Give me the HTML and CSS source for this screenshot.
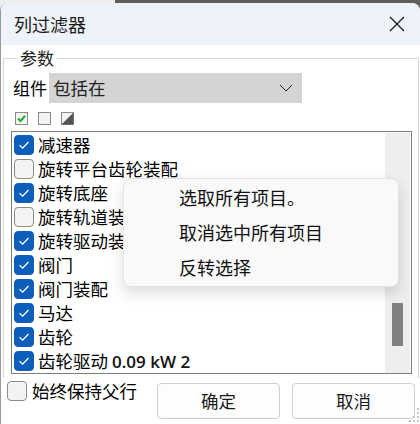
FILE: index.html
```html
<!DOCTYPE html>
<html lang="zh-CN">
<head>
<meta charset="utf-8">
<link rel="stylesheet" href="styles.css">
</head>
<body>
<div class="window">
  <div class="titlebar">
    <span class="title">列过滤器</span>
    <svg class="close" width="16" height="16" viewBox="0 0 16 16"><path d="M1 1 L15 15 M15 1 L1 15" stroke="#1a1a1a" stroke-width="1.3" fill="none"/></svg>
  </div>
  <fieldset class="group">
    <legend>参数</legend>
    <div class="combo-row">
      <span class="combo-label">组件</span>
      <div class="combo">
        <span>包括在</span>
        <svg width="14" height="8" viewBox="0 0 14 8"><path d="M1 1 L7 7 L13 1" stroke="#222" stroke-width="1" fill="none"/></svg>
      </div>
    </div>
    <div class="tools">
      <span class="tool"><svg width="13" height="13" viewBox="0 0 13 13"><rect x="0.5" y="0.5" width="12" height="12" fill="#f4f4f4" stroke="#8a8a8a"/><path d="M3 6.5 L5.5 9 L10 4" stroke="#1faa1f" stroke-width="2" fill="none"/></svg></span>
      <span class="tool"><svg width="13" height="13" viewBox="0 0 13 13"><rect x="0.5" y="0.5" width="12" height="12" fill="#f4f4f4" stroke="#8a8a8a"/></svg></span>
      <span class="tool"><svg width="13" height="13" viewBox="0 0 13 13"><rect x="0.5" y="0.5" width="12" height="12" fill="#f4f4f4" stroke="#8a8a8a"/><path d="M12.5 0.5 L12.5 12.5 L0.5 12.5 Z" fill="#555"/></svg></span>
    </div>
    <div class="list">
      <div class="rows">
        <div class="row"><span class="cb on"></span><span>减速器</span></div>
        <div class="row"><span class="cb"></span><span>旋转平台齿轮装配</span></div>
        <div class="row"><span class="cb on"></span><span>旋转底座</span></div>
        <div class="row"><span class="cb"></span><span>旋转轨道装配</span></div>
        <div class="row"><span class="cb on"></span><span>旋转驱动装配</span></div>
        <div class="row"><span class="cb on"></span><span>阀门</span></div>
        <div class="row"><span class="cb on"></span><span>阀门装配</span></div>
        <div class="row"><span class="cb on"></span><span>马达</span></div>
        <div class="row"><span class="cb on"></span><span>齿轮</span></div>
        <div class="row"><span class="cb on"></span><span>齿轮驱动 <span class="latin">0.09 kW 2</span></span></div>
      </div>
      <div class="scrollbar"><div class="thumb"></div></div>
    </div>
  </fieldset>
  <div class="footer">
    <label class="keep"><span class="cb"></span><span>始终保持父行</span></label>
    <button class="btn ok">确定</button>
    <button class="btn cancel">取消</button>
  </div>
  <div class="menu">
    <div class="mi">选取所有项目。</div>
    <div class="mi">取消选中所有项目</div>
    <div class="mi">反转选择</div>
  </div>
  <svg class="grip" width="12" height="18" viewBox="0 0 12 18">
    <g fill="#b5b5b5">
      <circle cx="10" cy="3" r="1"/><circle cx="10" cy="7" r="1"/><circle cx="10" cy="11" r="1"/><circle cx="10" cy="15" r="1"/>
      <circle cx="6" cy="15" r="1"/><circle cx="2" cy="15" r="1"/><circle cx="6" cy="11" r="1"/>
    </g>
  </svg>
</div>
</body>
</html>
```
FILE: styles.css
```css
* { box-sizing: border-box; }
html, body {
  margin: 0;
  padding: 0;
  width: 420px;
  height: 424px;
  overflow: hidden;
}
body {
  background: linear-gradient(to right, #efefef 115px, #5e5e5e 115px);
  font-family: "Noto Sans CJK SC", "Noto Sans", sans-serif;
  color: #000;
}
.window {
  position: relative;
  margin-top: 3px;
  width: 420px;
  height: 421px;
  background: #fff;
  border-left: 1px solid #9a9a9a;
  border-top-left-radius: 8px;
  border-top-right-radius: 8px;
  overflow: hidden;
}
.titlebar {
  height: 42px;
  background: #eef2f9;
  display: flex;
  align-items: center;
  justify-content: space-between;
  padding: 0 15px 0 13px;
}
.title {
  font-size: 18px;
  line-height: 20px;
  color: #1a1a1a;
}
.close { display: block; }
.group {
  margin: 2px 1px 0 2px;
  padding: 0 0 0 7px;
  border: 1px solid #d6d6d6;
  border-bottom: none;
  height: 331px;
}
.group legend {
  padding: 0 3px;
  margin-left: 6px;
  font-size: 17px;
  line-height: 22px;
  color: #222;
}
.combo-row {
  display: flex;
  align-items: center;
  margin-top: 4px;
  height: 30px;
}
.combo-label {
  font-size: 17px;
  width: 38px;
  padding-left: 2px;
  line-height: 22px;
}
.combo {
  width: 253px;
  height: 30px;
  background: #d4d4d4;
  display: flex;
  align-items: center;
  justify-content: space-between;
  padding: 0 9px 0 4px;
  font-size: 17.5px;
  line-height: 22px;
  color: #222;
}
.combo svg { display: block; }
.tools {
  display: flex;
  gap: 10px;
  margin-top: 9px;
  padding-left: 4px;
  height: 13px;
}
.tool svg { display: block; }
.list {
  position: relative;
  margin-top: 6px;
  width: 401px;
  height: 243px;
  border: 1px solid #7c7c7c;
  display: flex;
  justify-content: space-between;
}
.rows {
  padding: 1px 0 0 2px;
}
.row {
  display: flex;
  align-items: center;
  gap: 4px;
  height: 24px;
  font-size: 17.5px;
  line-height: 22px;
  white-space: nowrap;
}
.latin {
  font-family: "Open Sans", "Noto Sans", sans-serif;
  font-size: 17px;
  font-weight: 600;
  color: #111;
}
.cb {
  flex: none;
  width: 20px;
  height: 20px;
  border-radius: 4px;
  background: #f3f3f3;
  border: 1px solid #8b8b8b;
}
.cb.on {
  background: #0b5fbb url("data:image/svg+xml,%3Csvg xmlns='http://www.w3.org/2000/svg' width='20' height='20'%3E%3Cpath d='M5.5 10.2 L8.6 13.2 L14.5 7' stroke='white' stroke-width='1.3' fill='none'/%3E%3C/svg%3E") center/20px 20px no-repeat;
  border-color: #0b5fbb;
}
.scrollbar {
  width: 25px;
  margin: 1px 1px 0 0;
  height: 240px;
  background: #eeeeee;
  padding: 170px 0 0 7px;
}
.thumb {
  width: 11px;
  height: 43px;
  background: #808080;
}
.footer {
  display: flex;
  align-items: flex-start;
  padding: 2px 4px 0 6px;
}
.keep {
  display: flex;
  align-items: center;
  gap: 5px;
  font-size: 17.5px;
  line-height: 22px;
  width: 150px;
  white-space: nowrap;
}
.btn {
  font-family: "Noto Sans CJK SC", sans-serif;
  font-size: 17.5px;
  line-height: 22px;
  height: 36px;
  width: 123px;
  margin-top: 3px;
  background: #fdfdfd;
  border: 1px solid #d0d0d0;
  border-radius: 4px;
  color: #1a1a1a;
  padding: 0;
}
.ok { margin-right: 12px; }
.menu {
  position: absolute;
  left: 122px;
  top: 175px;
  width: 276px;
  height: 109px;
  background: #f9f9f9;
  border: 1px solid #e3e3e3;
  border-radius: 8px;
  box-shadow: 0 6px 14px rgba(0,0,0,0.14);
  padding: 0 0 0 55px;
}
.mi {
  height: 35px;
  display: flex;
  align-items: center;
  font-size: 18px;
  line-height: 22px;
  color: #111;
}
.grip {
  position: absolute;
  right: 0;
  bottom: 0;
}
```
